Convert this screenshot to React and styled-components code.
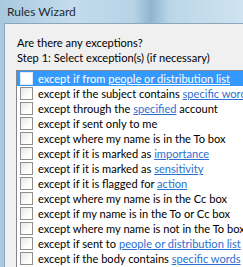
import React from 'react'
import styled, { createGlobalStyle } from 'styled-components'

const GlobalStyles = createGlobalStyle`
    html, body {
        margin: 0;
        padding: 0;
    }
    body {
        font-family: Lato, "Liberation Sans", sans-serif;
        font-size: 11.1px;
    }
`

const Ventana = styled.div`
    width: 243px;
    height: 267px;
    overflow: hidden;
    background: linear-gradient(90deg, #a9c9de 0%, #c4dcec 30%, #b7d3e6 55%, #8fb6d0 62%, #bcd6e8 70%, #cfe3f0 100%);
    display: flex;
    flex-direction: column;
`

const BarraTitulo = styled.div`
    height: 23px;
    flex-shrink: 0;
    padding-left: 7px;
    display: flex;
    align-items: center;
    color: #1e2a36;
    font-size: 12px;
    white-space: nowrap;
`

const Cuerpo = styled.div`
    flex: 1;
    margin-left: 4px;
    background: #f0f0f0;
    border-top: 1px solid #8aa7bd;
    border-left: 1px solid #8aa7bd;
    padding: 11px 0 0 11px;
    display: flex;
    flex-direction: column;
`

const Texto = styled.div`
    height: 15px;
    line-height: 15px;
    padding-left: 1px;
    color: #000;
    white-space: nowrap;
`

const Lista = styled.div`
    margin-top: 5px;
    background: #fff;
    border-top: 1px solid #828790;
    border-left: 1px solid #828790;
    flex: 1;
    display: flex;
    flex-direction: column;
`

const Fila = styled.div`
    height: 15px;
    display: flex;
    align-items: center;
    gap: 5px;
    padding-left: 3px;
    white-space: nowrap;
    color: ${p => (p.$activa ? '#fff' : '#000')};
    background: ${p => (p.$activa ? '#3399ff' : 'transparent')};
`

const Casilla = styled.span`
    width: 11px;
    height: 11px;
    flex-shrink: 0;
    border: 1px solid ${p => (p.$activa ? '#dbe9f7' : '#8f8f8f')};
    background: ${p => (p.$activa ? '#ffffff' : 'linear-gradient(135deg, #e6e6e6 0%, #ffffff 70%)')};
`

const Enlace = styled.span`
    text-decoration: underline;
    color: ${p => (p.$activa ? '#fff' : '#2d6fcf')};
`

const excepciones = [
    ['except if from ', 'people or distribution list', ''],
    ['except if the subject contains ', 'specific words', ''],
    ['except through the ', 'specified', ' account'],
    ['except if sent only to me', '', ''],
    ['except where my name is in the To box', '', ''],
    ['except if it is marked as ', 'importance', ''],
    ['except if it is marked as ', 'sensitivity', ''],
    ['except if it is flagged for ', 'action', ''],
    ['except where my name is in the Cc box', '', ''],
    ['except if my name is in the To or Cc box', '', ''],
    ['except where my name is not in the To box', '', ''],
    ['except if sent to ', 'people or distribution list', ''],
    ['except if the body contains ', 'specific words', ''],
]

export default function App() {
    return (
        <>
            <GlobalStyles />
            <Ventana>
                <BarraTitulo>Rules Wizard</BarraTitulo>
                <Cuerpo>
                    <Texto>Are there any exceptions?</Texto>
                    <Texto>Step 1: Select exception(s) (if necessary)</Texto>
                    <Lista>
                        {excepciones.map(([antes, enlace, despues], i) => (
                            <Fila key={i} $activa={i === 0}>
                                <Casilla $activa={i === 0} />
                                <span>
                                    {antes}
                                    {enlace && <Enlace $activa={i === 0}>{enlace}</Enlace>}
                                    {despues}
                                </span>
                            </Fila>
                        ))}
                    </Lista>
                </Cuerpo>
            </Ventana>
        </>
    )
}
